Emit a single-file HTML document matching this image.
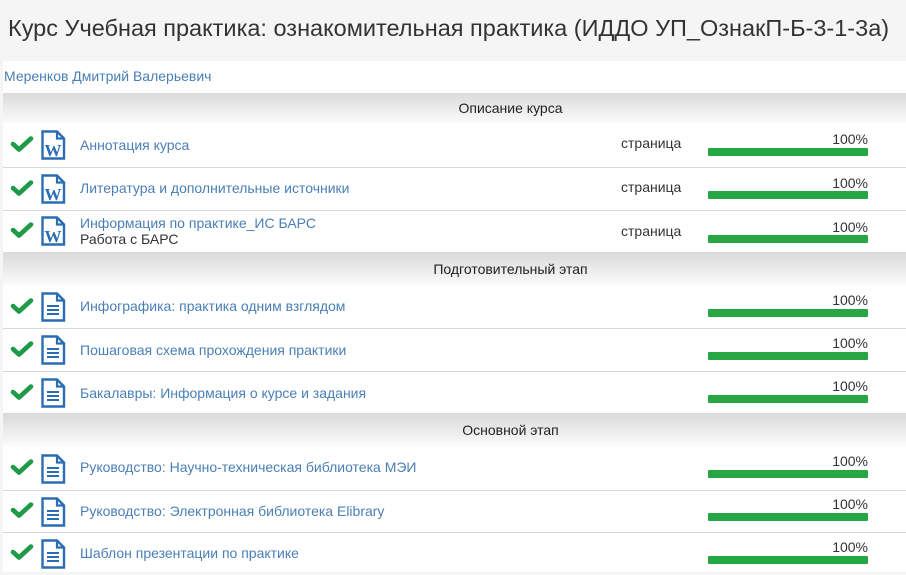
<!DOCTYPE html>
<html><head><meta charset="utf-8">
<style>
*{margin:0;padding:0;box-sizing:border-box}
body{width:906px;height:572px;overflow:hidden;background:#f5f5f5;font-family:"Liberation Sans","Noto Sans CJK JP",sans-serif;position:relative;color:#333}
.title{position:absolute;left:8px;top:15px;font-size:23.5px;color:#333;white-space:nowrap}
.main{position:absolute;left:3px;top:61px;width:903px;height:511px;background:#fff}
.auth{position:absolute;left:4px;top:68px;font-size:14px;color:#4a7fb5}
.hdr{position:absolute;left:3px;width:903px;padding-left:112px;background:linear-gradient(#dadada,#fbfbfb);font-size:14px;color:#222;text-align:center}
.row{position:absolute;left:3px;width:903px;border-bottom:1px solid #d2dcdc}
.chk{position:absolute;left:7px}
.doc{position:absolute;left:37px}
.t{position:absolute;left:77px;font-size:14px;color:#4a7fb5;white-space:nowrap}
.t2{position:absolute;left:77px;font-size:14px;color:#333}
.pg{position:absolute;left:618px;font-size:14px;color:#333}
.pct{position:absolute;left:705px;width:160px;text-align:right;font-size:14px;color:#333}
.bar{position:absolute;left:705px;width:160px;height:8px;background:#27a644;border-radius:1px}
</style></head><body>
<div class="title">Курс Учебная практика: ознакомительная практика (ИДДО УП_ОзнакП-Б-3-1-3а)</div>
<div class="main"></div>
<div class="auth">Меренков Дмитрий Валерьевич</div>

<svg width="0" height="0" style="position:absolute">
<defs>
<symbol id="ck" viewBox="0 0 24 16"><path d="M3 8 L9 13.5 L21 2.5" fill="none" stroke="#1f9a48" stroke-width="4.6" stroke-linejoin="round" stroke-linecap="round"/></symbol>
<symbol id="w" viewBox="0 0 26 30"><path d="M2.5 1.5 H17 L24 8.5 V28.5 H2.5 Z" fill="#fff" stroke="#2a6db3" stroke-width="2.4"/><path d="M17 1.5 V8.5 H24" fill="none" stroke="#2a6db3" stroke-width="2.2"/><text x="13" y="26" font-size="17" font-weight="bold" text-anchor="middle" fill="#2a6db3" font-family="Liberation Serif">W</text></symbol>
<symbol id="d" viewBox="0 0 26 30"><path d="M2.5 1.5 H17 L24 8.5 V28.5 H2.5 Z" fill="#fff" stroke="#2a6db3" stroke-width="2.4"/><path d="M17 1.5 V8.5 H24" fill="none" stroke="#2a6db3" stroke-width="2.2"/><path d="M7 14 H19 M7 18 H19 M7 22 H19" stroke="#2a6db3" stroke-width="2"/></symbol>
</defs></svg>

<div class="hdr" style="top:93px;height:30px;line-height:30px">Описание курса</div>
<div class="row" style="top:123px;height:45px">
<svg class="chk" style="top:13px" width="24" height="16"><use href="#ck"/></svg>
<svg class="doc" style="top:7px" width="26" height="30"><use href="#w"/></svg>
<div class="t" style="top:14px">Аннотация курса</div>
<div class="pg" style="top:12px">страница</div>
<div class="pct" style="top:8px">100%</div>
<div class="bar" style="top:25px"></div>
</div>
<div class="row" style="top:168px;height:43px">
<svg class="chk" style="top:12px" width="24" height="16"><use href="#ck"/></svg>
<svg class="doc" style="top:6px" width="26" height="30"><use href="#w"/></svg>
<div class="t" style="top:12px">Литература и дополнительные источники</div>
<div class="pg" style="top:11px">страница</div>
<div class="pct" style="top:7px">100%</div>
<div class="bar" style="top:23px"></div>
</div>
<div class="row" style="top:211px;height:42px">
<svg class="chk" style="top:11px" width="24" height="16"><use href="#ck"/></svg>
<svg class="doc" style="top:5px" width="26" height="30"><use href="#w"/></svg>
<div class="t" style="top:4px">Информация по практике_ИС БАРС</div>
<div class="t2" style="top:20px">Работа с БАРС</div>
<div class="pg" style="top:12px">страница</div>
<div class="pct" style="top:8px">100%</div>
<div class="bar" style="top:24px"></div>
</div>

<div class="hdr" style="top:253px;height:32px;line-height:32px">Подготовительный этап</div>
<div class="row" style="top:285px;height:44px">
<svg class="chk" style="top:13px" width="24" height="16"><use href="#ck"/></svg>
<svg class="doc" style="top:7px" width="26" height="30"><use href="#d"/></svg>
<div class="t" style="top:13px">Инфографика: практика одним взглядом</div>
<div class="pct" style="top:7px">100%</div>
<div class="bar" style="top:24px"></div>
</div>
<div class="row" style="top:329px;height:43px">
<svg class="chk" style="top:12px" width="24" height="16"><use href="#ck"/></svg>
<svg class="doc" style="top:6px" width="26" height="30"><use href="#d"/></svg>
<div class="t" style="top:13px">Пошаговая схема прохождения практики</div>
<div class="pct" style="top:6px">100%</div>
<div class="bar" style="top:23px"></div>
</div>
<div class="row" style="top:372px;height:42px">
<svg class="chk" style="top:12px" width="24" height="16"><use href="#ck"/></svg>
<svg class="doc" style="top:6px" width="26" height="30"><use href="#d"/></svg>
<div class="t" style="top:13px">Бакалавры: Информация о курсе и задания</div>
<div class="pct" style="top:6px">100%</div>
<div class="bar" style="top:23px"></div>
</div>

<div class="hdr" style="top:414px;height:33px;line-height:33px">Основной этап</div>
<div class="row" style="top:447px;height:44px">
<svg class="chk" style="top:12px" width="24" height="16"><use href="#ck"/></svg>
<svg class="doc" style="top:7px" width="26" height="30"><use href="#d"/></svg>
<div class="t" style="top:12px">Руководство: Научно-техническая библиотека МЭИ</div>
<div class="pct" style="top:6px">100%</div>
<div class="bar" style="top:23px"></div>
</div>
<div class="row" style="top:491px;height:42px">
<svg class="chk" style="top:11px" width="24" height="16"><use href="#ck"/></svg>
<svg class="doc" style="top:6px" width="26" height="30"><use href="#d"/></svg>
<div class="t" style="top:12px">Руководство: Электронная библиотека Elibrary</div>
<div class="pct" style="top:5px">100%</div>
<div class="bar" style="top:22px"></div>
</div>
<div class="row" style="top:533px;height:42px;border-bottom:none">
<svg class="chk" style="top:11px" width="24" height="16"><use href="#ck"/></svg>
<svg class="doc" style="top:6px" width="26" height="30"><use href="#d"/></svg>
<div class="t" style="top:12px">Шаблон презентации по практике</div>
<div class="pct" style="top:6px">100%</div>
<div class="bar" style="top:23px"></div>
</div>
</body></html>
